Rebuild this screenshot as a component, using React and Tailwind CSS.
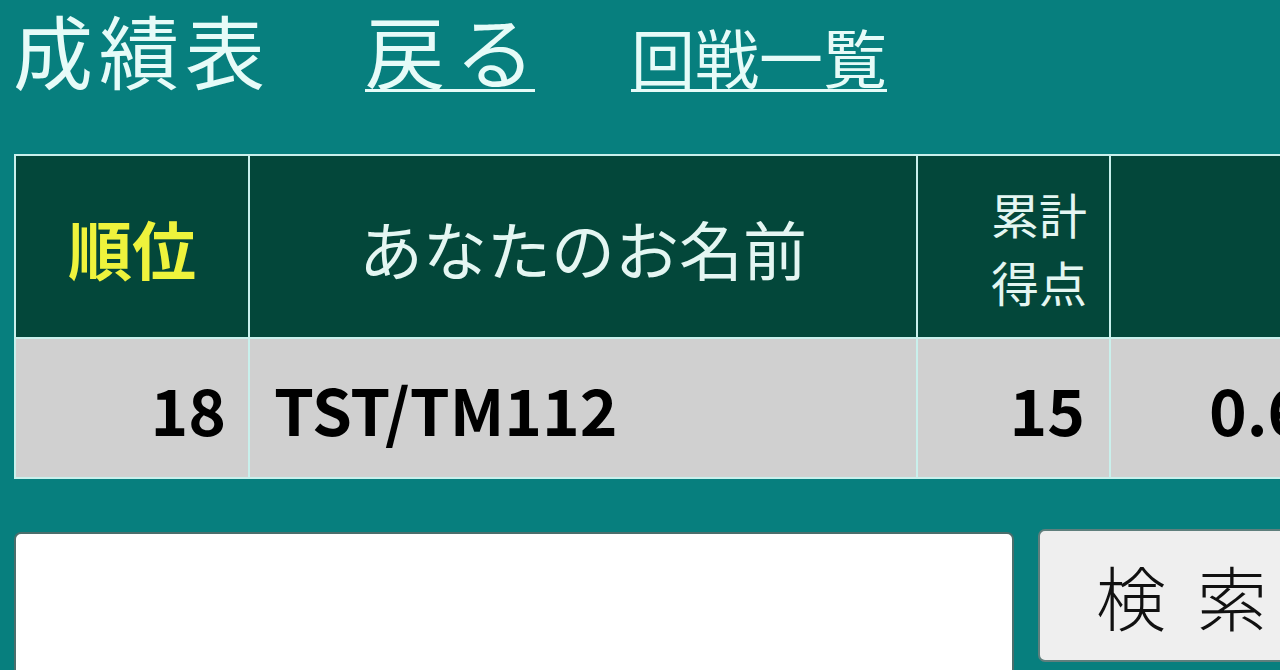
export default function App() {
  const font = { fontFamily: '"Noto Sans CJK JP", "Noto Sans", sans-serif' };
  return (
    <div
      className="w-[1280px] h-[670px] overflow-hidden bg-[#077f7e]"
      style={font}
    >
      <div className="h-[154px] pl-[13px] pt-0 flex items-baseline text-[#e6fbf8]">
        <span className="text-[80px] leading-[1.2] font-normal tracking-[6px]">成績表</span>
        <a className="ml-[94px] text-[80px] leading-[1.2] font-normal underline decoration-[3px] underline-offset-[6px]">
          <span className="tracking-[10px]">戻</span>る
        </a>
        <a className="ml-[96px] text-[64px] leading-[1.2] font-normal underline decoration-[3px] underline-offset-[6px]">
          回戦一覧
        </a>
      </div>

      <div className="ml-[14px] w-[1400px] bg-[#c9f0ec] p-[2px] grid grid-cols-[232px_666px_191px_251px_1fr] grid-rows-[181px_138px] gap-[2px]">
        <div className="bg-[#03473a] flex items-center justify-center">
          <span className="text-[64px] font-bold text-[#eef33c] leading-none">順位</span>
        </div>
        <div className="bg-[#03473a] flex items-center justify-center">
          <span className="text-[64px] text-[#e4f6f2] leading-none">あなたのお名前</span>
        </div>
        <div className="bg-[#03473a] flex items-center justify-end pr-[22px]">
          <span className="text-[48px] text-[#e4f6f2] leading-[68px] text-right">
            累計
            <br />
            得点
          </span>
        </div>
        <div className="bg-[#03473a]"></div>
        <div className="bg-[#03473a]"></div>

        <div className="bg-[#d0d0d0] flex items-center justify-end pr-[22px]">
          <span className="text-[64px] font-bold text-black leading-none">18</span>
        </div>
        <div className="bg-[#d0d0d0] flex items-center pl-[24px]">
          <span className="text-[64px] font-bold text-black leading-none">TST/TM112</span>
        </div>
        <div className="bg-[#d0d0d0] flex items-center justify-end pr-[24px]">
          <span className="text-[64px] font-bold text-black leading-none">15</span>
        </div>
        <div className="bg-[#d0d0d0] flex items-center justify-end pr-[19px]">
          <span className="text-[64px] font-bold text-black leading-none">0.60</span>
        </div>
        <div className="bg-[#d0d0d0]"></div>
      </div>

      <div className="mt-[50px] ml-[14px] flex items-start gap-[24px]">
        <div className="shrink-0 mt-[3px] w-[1000px] h-[200px] bg-white border-2 border-[#4b6e6c] rounded-[7px]"></div>
        <button className="shrink-0 w-[300px] h-[133px] bg-[#efefef] border-2 border-[#5f7f7d] rounded-[7px] flex items-center pl-[56px] text-[70px] text-[#111] font-light leading-none">
          検&nbsp;&nbsp;索
        </button>
      </div>
    </div>
  );
}
